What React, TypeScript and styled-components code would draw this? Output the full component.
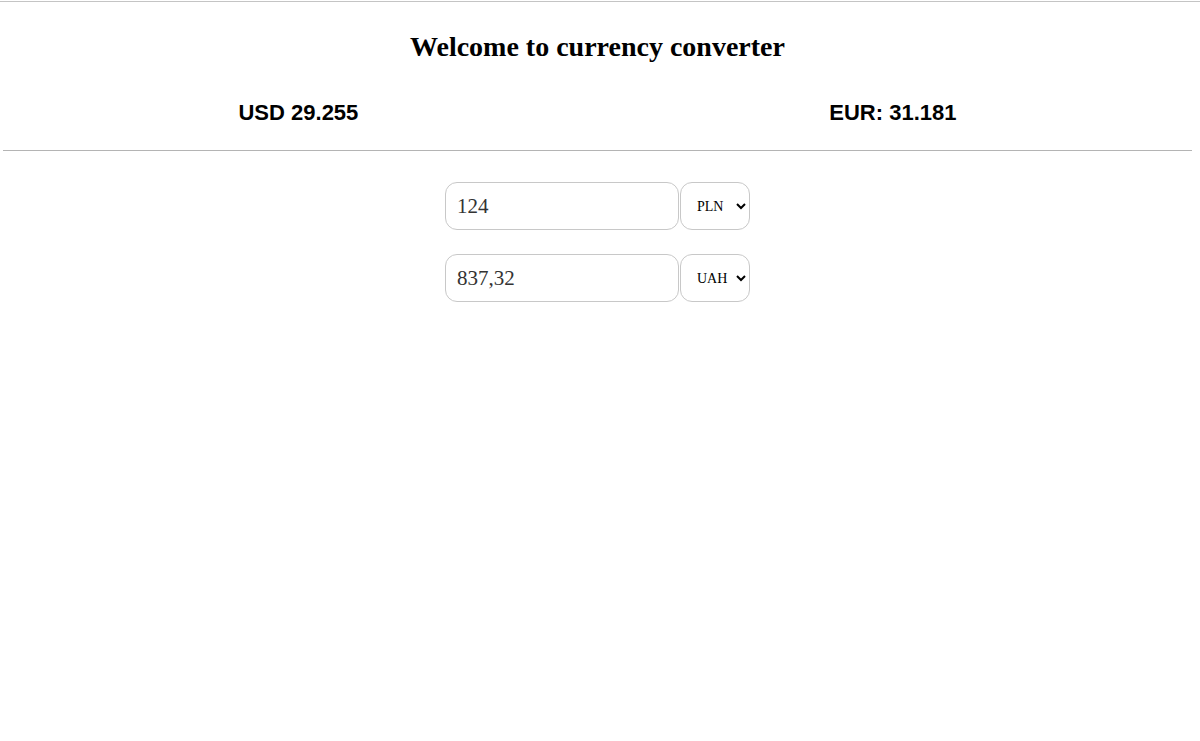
import React, { useState } from 'react';
import styled, { createGlobalStyle } from 'styled-components';

const GlobalStyle = createGlobalStyle`
  html, body {
    margin: 0;
    padding: 0;
    background: #ffffff;
  }
  body {
    font-family: 'Liberation Serif', 'Times New Roman', serif;
    color: #000000;
  }
`;

const Page = styled.div`
  display: flex;
  flex-direction: column;
  width: 1200px;
  min-height: 741px;
  border-top: 1px solid #c4c4c4;
  box-sizing: border-box;
  margin-top: 1px;
`;

const Header = styled.header`
  display: flex;
  flex-direction: column;
  align-items: center;
  margin: 0 8px 0 3px;
  border-bottom: 1px solid #b4b4b4;
`;

const Title = styled.h1`
  margin: 30px 0 0;
  font-family: 'Liberation Serif', 'Times New Roman', serif;
  font-weight: 700;
  font-size: 28px;
  line-height: 30px;
`;

const RatesRow = styled.div`
  display: flex;
  justify-content: space-around;
  width: 100%;
  padding: 38px 0 24px;
`;

const Rate = styled.span`
  font-family: 'Liberation Sans', Arial, sans-serif;
  font-weight: 700;
  font-size: 22px;
  line-height: 26px;
`;

const Converter = styled.main`
  display: flex;
  flex-direction: column;
  align-items: center;
  gap: 24px;
  padding: 31px 0 0 0;
  margin-left: -5px;
`;

const Row = styled.div`
  display: flex;
  align-items: stretch;
  gap: 1px;
`;

const AmountInput = styled.input`
  box-sizing: border-box;
  width: 234px;
  height: 48px;
  padding: 0 11px;
  border: 1px solid #c8c8c8;
  border-radius: 12px;
  font-family: 'Liberation Serif', 'Times New Roman', serif;
  font-size: 21px;
  color: #333333;
  outline: none;
`;

const CurrencySelect = styled.select`
  box-sizing: border-box;
  width: 70px;
  height: 48px;
  padding: 0 4px 0 12px;
  border: 1px solid #c8c8c8;
  border-radius: 12px;
  background: #ffffff;
  font-family: 'Liberation Serif', 'Times New Roman', serif;
  font-size: 14px;
  color: #000000;
`;

const currencies = ['UAH', 'USD', 'EUR', 'PLN'];

export default function App() {
  const [fromValue, setFromValue] = useState('124');
  const [toValue, setToValue] = useState('837,32');
  const [fromCur, setFromCur] = useState('PLN');
  const [toCur, setToCur] = useState('UAH');

  return (
    <>
      <GlobalStyle />
      <Page>
        <Header>
          <Title>Welcome to currency converter</Title>
          <RatesRow>
            <Rate>USD 29.255</Rate>
            <Rate>EUR: 31.181</Rate>
          </RatesRow>
        </Header>
        <Converter>
          <Row>
            <AmountInput value={fromValue} onChange={e => setFromValue(e.target.value)} />
            <CurrencySelect value={fromCur} onChange={e => setFromCur(e.target.value)}>
              {currencies.map(c => <option key={c} value={c}>{c}</option>)}
            </CurrencySelect>
          </Row>
          <Row>
            <AmountInput value={toValue} onChange={e => setToValue(e.target.value)} />
            <CurrencySelect value={toCur} onChange={e => setToCur(e.target.value)}>
              {currencies.map(c => <option key={c} value={c}>{c}</option>)}
            </CurrencySelect>
          </Row>
        </Converter>
      </Page>
    </>
  );
}
